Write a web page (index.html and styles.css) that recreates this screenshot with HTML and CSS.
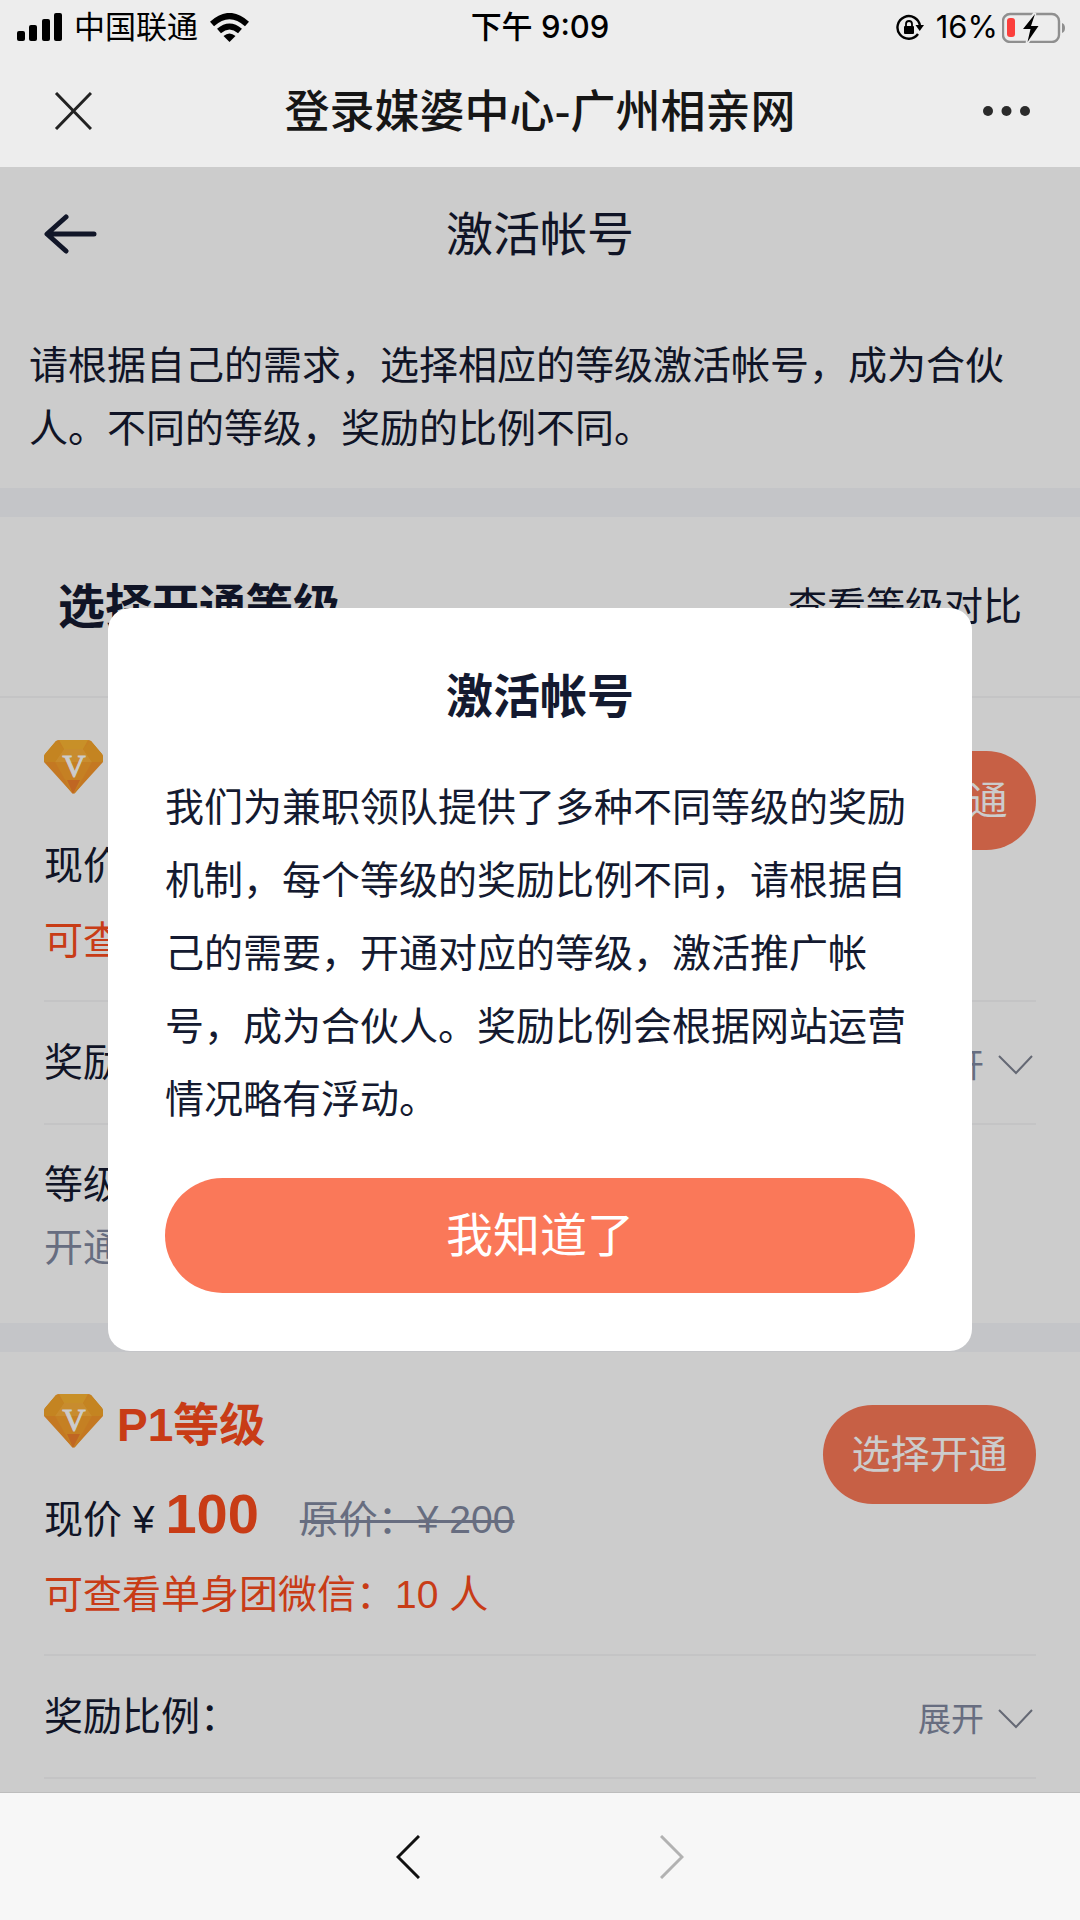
FILE: index.html
```html
<!DOCTYPE html>
<html lang="zh-CN">
<head>
<meta charset="utf-8">
<meta name="viewport" content="width=device-width, initial-scale=1">
<title>登录媒婆中心-广州相亲网</title>
<link rel="stylesheet" href="styles.css">
</head>
<body>
<svg class="defs" width="0" height="0" aria-hidden="true">
  <symbol id="gem" viewBox="0 0 59 54">
    <path fill="#f7a02c" d="M15 0h29q2 0 3 1l11 13q2 3 0 6L31 53q-1 1-3 0L1 20q-2-3 0-6L12 1q1-1 3-1z"/>
    <path fill="#fbb432" d="M15 0h29l-5 9H20z"/>
    <path fill="#fbb03a" d="M20 9h19l9 13H11z"/>
    <path fill="#f5a62a" d="M12 1l8 8-9 13H0q-1-5 1-8zM47 1l-8 8 9 13h11q1-5-1-8z"/>
    <path fill="#f5972b" d="M0 22h11l18 32zM59 22H48L30 54z"/>
    <path fill="#f0802c" d="M29 54l-6-14h13z"/>
    <text class="gem-letter" x="30" y="37" text-anchor="middle">V</text>
  </symbol>
  <symbol id="chevron" viewBox="0 0 35 20">
    <path fill="none" stroke="#7e8391" stroke-width="2" d="M1 1l17 17L34 1"/>
  </symbol>
</svg>
<div class="app">
  <header class="top">
    <div class="status">
      <div class="status-left">
        <svg width="45" height="28" viewBox="0 0 45 28" aria-hidden="true">
          <rect x="0" y="18" width="8" height="10" rx="2"/><rect x="12" y="12" width="8" height="16" rx="2"/><rect x="25" y="6" width="8" height="22" rx="2"/><rect x="37" y="0" width="8" height="28" rx="2"/>
        </svg>
        <span>中国联通</span>
        <svg width="39" height="29" viewBox="0 0 39 29" aria-hidden="true">
          <path fill="none" stroke="#000" stroke-width="6" d="M2 11Q19.500-5 37 11"/>
          <path fill="none" stroke="#000" stroke-width="6" d="M9 18Q19.500 9 30 18"/>
          <path d="M13.500 23Q19.500 18 25.500 23L19.500 29z"/>
        </svg>
      </div>
      <div class="status-time">下午 9:09</div>
      <div class="status-right">
        <svg width="28" height="27" viewBox="0 0 28 27" aria-hidden="true">
          <path fill="none" stroke="#000" stroke-width="2.400" d="M24 12A11.300 11.300 0 1 0 22 20"/>
          <path d="M19.500 11H28l-4.300 6z"/>
          <rect x="8" y="12" width="10" height="8" rx="1"/>
          <path fill="none" stroke="#000" stroke-width="1.800" d="M10 13v-3a3 3 0 0 1 6 0v3"/>
        </svg>
        <span>16%</span>
        <svg class="battery" width="64" height="31" viewBox="0 0 64 31" aria-hidden="true">
          <rect x="1" y="2" width="56" height="28" rx="7" fill="none" stroke="#8f8f8f" stroke-width="2.400"/>
          <path fill="#8f8f8f" d="M60 11q3 1 3 5t-3 5z"/>
          <rect x="5" y="6" width="8" height="19" rx="3" fill="#fb3f3c"/>
          <path stroke="#ededed" stroke-width="3" d="M33 1L20 18h8l-3 13 12-17h-8z"/>
          <path d="M33 2L21 17h7.500l-3 13L36.500 14H29z"/>
        </svg>
      </div>
    </div>
    <div class="titlebar">
      <button class="icon-button" type="button" aria-label="关闭">
        <svg width="42" height="38" viewBox="-5 0 42 38"><path fill="none" stroke="#222" stroke-width="3" d="M1 1l35 36M36 1L1 37"/></svg>
      </button>
      <h1 class="site-title">登录媒婆中心-广州相亲网</h1>
      <button class="icon-button icon-button-end" type="button" aria-label="更多">
        <svg width="47" height="10" viewBox="0 0 47 10" fill="#2b2b2b"><circle cx="5" cy="5" r="5"/><circle cx="23.500" cy="5" r="5"/><circle cx="42" cy="5" r="5"/></svg>
      </button>
    </div>
  </header>

  <main class="page">
    <div class="page-head">
      <button class="icon-button" type="button" aria-label="返回">
        <svg width="54" height="40" viewBox="0 0 54 40"><path fill="none" stroke="#161c33" stroke-width="5" stroke-linecap="round" stroke-linejoin="round" d="M22 3L3 20l19 17M4 20h46"/></svg>
      </button>
      <h2 class="page-title">激活帐号</h2>
    </div>
    <p class="intro">请根据自己的需求，选择相应的等级激活帐号，成为合伙人。不同的等级，奖励的比例不同。</p>

    <section class="levels">
      <div class="levels-head">
        <h2 class="levels-title">选择开通等级</h2>
        <a class="compare" href="#">查看等级对比</a>
      </div>

      <article class="level">
        <div class="summary">
          <div class="info">
            <div class="name"><svg class="gem" aria-hidden="true"><use href="#gem"/></svg></div>
            <div class="price">现价 <strong class="amount">¥</strong></div>
            <div class="quota">可查看</div>
          </div>
          <button class="choose" type="button">选择开通</button>
        </div>
        <div class="row">
          <span>奖励</span>
          <button class="expand" type="button">展开<svg class="chevron" aria-hidden="true"><use href="#chevron"/></svg></button>
        </div>
        <div class="note">
          <div>等级</div>
          <div class="muted">开通</div>
        </div>
      </article>

      <article class="level">
        <div class="summary">
          <div class="info">
            <h3 class="name"><svg class="gem" aria-hidden="true"><use href="#gem"/></svg>P1等级</h3>
            <div class="price">现价 ¥ <strong class="amount">100</strong><del class="original">原价：¥ 200</del></div>
            <div class="quota">可查看单身团微信：10 人</div>
          </div>
          <button class="choose" type="button">选择开通</button>
        </div>
        <div class="row">
          <span>奖励比例：</span>
          <button class="expand" type="button">展开<svg class="chevron" aria-hidden="true"><use href="#chevron"/></svg></button>
        </div>
      </article>
    </section>

    <div class="overlay">
      <div class="dialog" role="dialog" aria-modal="true" aria-labelledby="dialog-title">
        <h2 class="dialog-title" id="dialog-title">激活帐号</h2>
        <p class="dialog-text">我们为兼职领队提供了多种不同等级的奖励机制，每个等级的奖励比例不同，请根据自己的需要，开通对应的等级，激活推广帐号，成为合伙人。奖励比例会根据网站运营情况略有浮动。</p>
        <button class="confirm" type="button">我知道了</button>
      </div>
    </div>
  </main>

  <nav class="bottom">
    <button class="icon-button" type="button" aria-label="后退">
      <svg width="24" height="44" viewBox="0 0 24 44"><path fill="none" stroke="#111" stroke-width="3" d="M23 1L2 22l21 21"/></svg>
    </button>
    <button class="icon-button" type="button" aria-label="前进" disabled>
      <svg width="24" height="44" viewBox="0 0 24 44"><path fill="none" stroke="#b2b2b2" stroke-width="3" d="M1 1l21 21L1 43"/></svg>
    </button>
  </nav>
</div>
</body>
</html>
```
FILE: styles.css
```css
* {
  box-sizing: border-box;
}

body {
  margin: 0;
  color: #141a30;
  font: 39px/63px "Liberation Sans", "Noto Sans CJK SC", sans-serif;
}

h1, h2, h3, p {
  margin: 0;
}

button {
  margin: 0;
  padding: 0;
  border: 0;
  background: none;
  color: inherit;
  font: inherit;
}

svg {
  display: block;
  flex: none;
}

.defs {
  position: absolute;
}

.app {
  display: flex;
  flex-direction: column;
  height: 100vh;
}

/* Status bar and browser title */
.top {
  flex: none;
  background: #ededed;
  color: #000;
}

.status {
  display: grid;
  grid-template-columns: 1fr auto 1fr;
  align-items: center;
  height: 54px;
  padding: 0 14px;
  font: 31px/54px Inter, "Noto Sans CJK SC", sans-serif;
}

.status-left,
.status-right {
  display: flex;
  align-items: center;
  gap: 12px;
}

.status-left {
  padding-left: 3px;
}

.status-right {
  justify-content: flex-end;
}

.battery {
  margin-left: -8px;
}

.status-time {
  font-weight: 500;
}

.titlebar {
  display: grid;
  grid-template-columns: 1fr auto 1fr;
  align-items: center;
  height: 113px;
  padding: 0 50px;
}

.site-title {
  padding-bottom: 4px;
  color: #161616;
  font: 500 45px/109px "Noto Sans CJK SC", sans-serif;
}

.icon-button {
  display: flex;
  align-items: center;
}

.icon-button-end {
  justify-content: flex-end;
}

/* Page content */
.page {
  position: relative;
  flex: 1;
  min-height: 0;
  overflow: hidden;
  background: #fff;
}

.page-head {
  display: grid;
  grid-template-columns: 1fr auto 1fr;
  align-items: center;
  height: 134px;
  padding: 0 44px;
}

.page-title {
  font-size: 47px;
  font-weight: 400;
}

.intro {
  padding: 33px 29px 28px;
  border-bottom: 29px solid #f6f7fb;
}

.levels-head {
  display: flex;
  align-items: center;
  justify-content: space-between;
  height: 181px;
  padding: 0 58px;
  border-bottom: 2px solid #f6f6f7;
}

.levels-title {
  font-size: 47px;
}

.compare {
  color: inherit;
  text-decoration: none;
}

.level {
  padding: 0 44px;
}

.level + .level {
  border-top: 29px solid #f6f7fb;
}

.summary {
  display: flex;
  align-items: flex-start;
  justify-content: space-between;
  padding: 40px 0 28px;
  border-bottom: 2px solid #f6f6f7;
}

.name {
  display: flex;
  align-items: flex-start;
  gap: 14px;
  height: 62px;
  padding-top: 2px;
  color: #fb4b1c;
  font-size: 46px;
}

.gem {
  width: 59px;
  height: 54px;
}

.gem-letter {
  fill: #fff;
  font: 32px "Liberation Serif", serif;
  stroke: #fff;
}

.price {
  height: 93px;
  margin-top: 16px;
  line-height: 88px;
}

.amount {
  color: #fb4b1c;
  font-size: 56px;
}

.original {
  margin-left: 41px;
  color: #8189a0;
  text-decoration-thickness: 3px;
}

.quota {
  color: #fb4b1c;
}

.choose {
  width: 213px;
  height: 99px;
  margin-top: 13px;
  border-radius: 50px;
  background: #f97857;
  color: #fff;
}

.row {
  display: flex;
  align-items: center;
  justify-content: space-between;
  height: 123px;
  border-bottom: 2px solid #f6f6f7;
}

.expand {
  display: flex;
  align-items: center;
  gap: 14px;
  padding: 5px 3px 0 0;
  color: #8189a0;
  font-size: 33px;
}

.chevron {
  width: 35px;
  height: 20px;
}

.note {
  padding: 28px 0 44px;
}

.muted {
  color: #8189a0;
}

/* Dialog */
.overlay {
  position: absolute;
  inset: 0;
  display: flex;
  align-items: center;
  justify-content: center;
  background: rgba(0, 0, 0, 0.2);
}

.dialog {
  width: 80%;
  padding: 57px 57px 58px;
  border-radius: 22px;
  background: #fff;
}

.dialog-title {
  font-size: 47px;
  text-align: center;
}

.dialog-text {
  padding: 43px 0 42px;
  line-height: 73px;
}

.confirm {
  display: block;
  width: 100%;
  height: 115px;
  border-radius: 58px;
  background: #fa7859;
  color: #fff;
  font-size: 47px;
}

/* Browser navigation */
.bottom {
  display: flex;
  flex: none;
  align-items: center;
  justify-content: center;
  gap: 240px;
  height: 128px;
  border-top: 1px solid #bdbdbd;
  background: #f7f7f7;
}
```
